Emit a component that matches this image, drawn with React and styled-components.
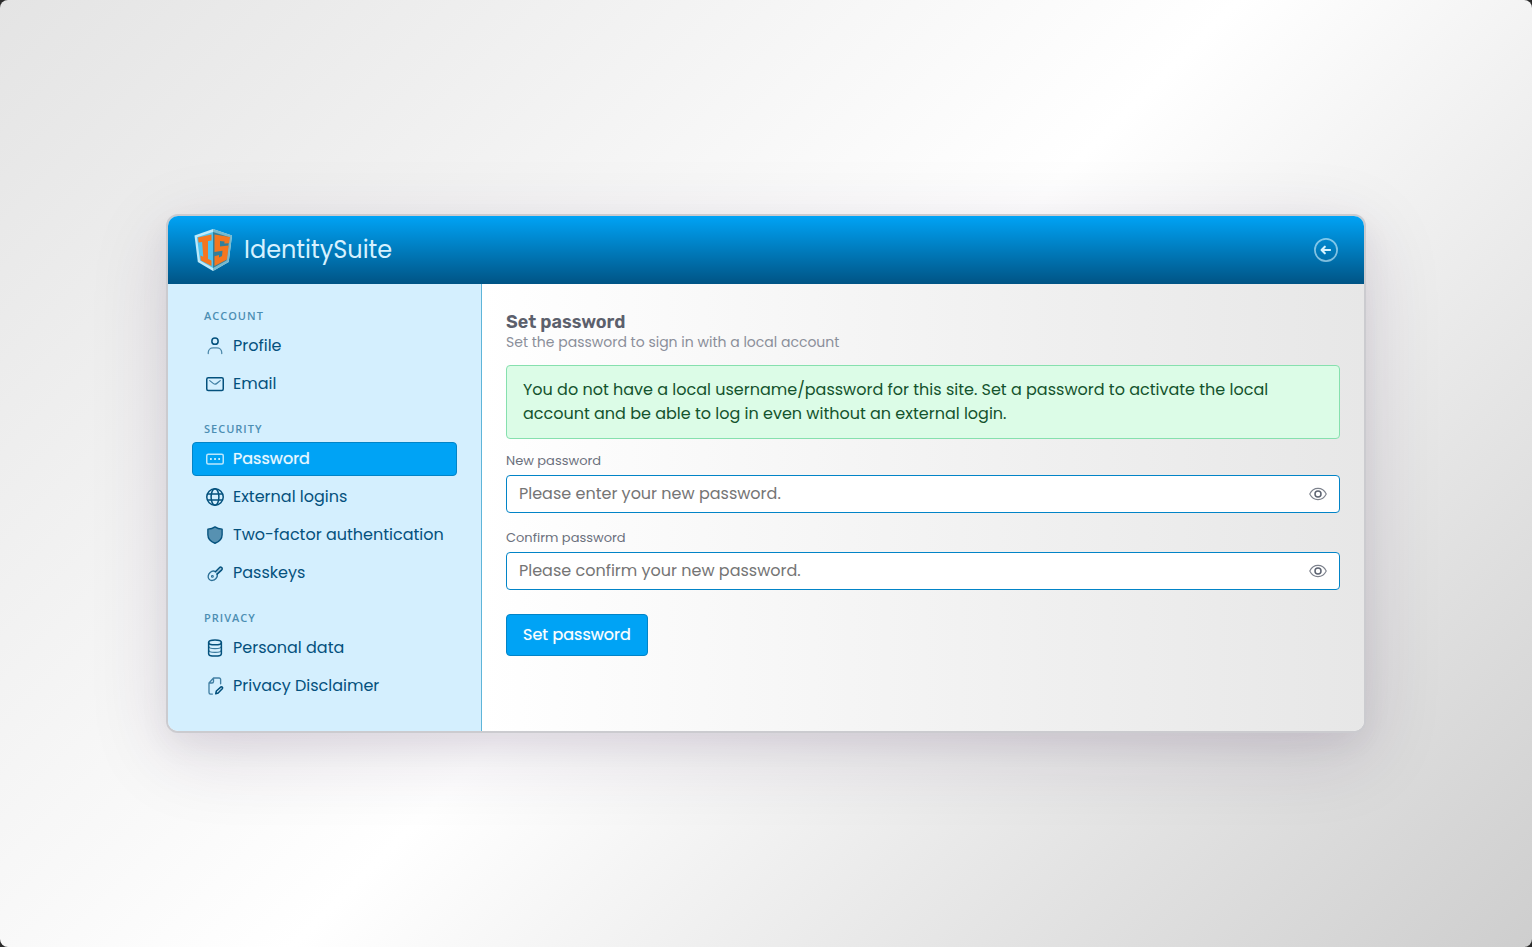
import React from "react";
import styled, { createGlobalStyle, css } from "styled-components";

const GlobalStyle = createGlobalStyle`
  * {
    box-sizing: border-box;
  }
  body {
    margin: 0;
    background: #2b2b2b;
    font-family: Poppins, Inter, "Open Sans", sans-serif;
    font-size: 16px;
    line-height: 24px;
  }
  button,
  input {
    font: inherit;
  }
`;

const Page = styled.div`
  display: flex;
  align-items: center;
  justify-content: center;
  min-height: 100vh;
  padding: 16px;
  border-radius: 8px;
  background: linear-gradient(135deg, #e4e4e4 0%, #ffffff 50%, #cecece 100%);
`;

const Panel = styled.div`
  width: 100%;
  max-width: 1200px;
  overflow: hidden;
  border: 2px solid #cbcbcf;
  border-radius: 12px;
  background: #fff;
  background-clip: padding-box;
  box-shadow: 0 20px 80px rgba(50, 20, 70, 0.14), 0 12px 30px rgba(50, 20, 70, 0.06);
`;

const Header = styled.header`
  display: flex;
  align-items: center;
  justify-content: space-between;
  height: 68px;
  padding: 0 24px;
  background: linear-gradient(180deg, #00a3f5 0%, #005485 100%);
`;

const Brand = styled.a`
  display: flex;
  align-items: center;
  gap: 10px;
  color: #d6f1ff;
  font-size: 24px;
  line-height: 36px;
  text-decoration: none;
`;

const BackButton = styled.button`
  display: flex;
  padding: 0;
  border: 0;
  background: none;
  color: #d6f3ff;
  cursor: pointer;
`;

const Body = styled.div`
  display: flex;
  @media only screen and (max-width: 820px) {
    flex-direction: column;
  }
`;

const Sidebar = styled.nav`
  flex: none;
  width: 314px;
  padding: 24px 24px 28px;
  border-right: 1px solid #5eb5d9;
  background: #d4effe;
  @media only screen and (max-width: 820px) {
    width: 100%;
  }
`;

const Group = styled.section`
  & + & {
    margin-top: 20px;
  }
`;

const GroupTitle = styled.h2`
  margin: 0 0 5px;
  padding: 0 12px;
  color: #4c8eb3;
  font-family: "Open Sans", sans-serif;
  font-size: 11px;
  font-weight: 600;
  line-height: 16px;
  letter-spacing: 1px;
  text-transform: uppercase;
`;

const Menu = styled.ul`
  display: flex;
  flex-direction: column;
  gap: 4px;
  margin: 0;
  padding: 0;
  list-style: none;
`;

const MenuLink = styled.a`
  display: flex;
  align-items: center;
  gap: 9px;
  height: 34px;
  padding: 0 13px;
  border: 1px solid transparent;
  border-radius: 4px;
  color: #04517d;
  text-decoration: none;
  white-space: nowrap;
  ${({ $active }) =>
    $active &&
    css`
      border-color: #0284c7;
      background: #00a3f5;
      color: #e9f8ff;
      text-shadow: 0 0 1px rgba(233, 248, 255, 0.6);
    `}
`;

const Content = styled.main`
  flex: 1;
  min-width: 0;
  padding: 28px 24px;
  background: linear-gradient(90deg, #ffffff 0%, #e7e7e7 100%);
`;

const Title = styled.h1`
  margin: 0;
  color: #5c606c;
  font-family: Rubik, Roboto, sans-serif;
  font-size: 18px;
  font-weight: 600;
  line-height: 20px;
`;

const Subtitle = styled.p`
  margin: 0 0 12px;
  color: #8b8f9a;
  font-size: 14px;
  line-height: 21px;
`;

const Alert = styled.p`
  margin: 0 0 12px;
  padding: 12px 16px;
  border: 1px solid #86e0ae;
  border-radius: 4px;
  background: #dcfce7;
  color: #14532d;
`;

const Field = styled.div`
  margin-bottom: 15px;
`;

const Label = styled.label`
  display: block;
  margin-bottom: 4px;
  color: #6b707c;
  font-size: 13px;
  line-height: 20px;
`;

const InputBox = styled.div`
  display: flex;
  align-items: center;
  height: 38px;
  padding: 0 12px;
  border: 1px solid #0284c7;
  border-radius: 4px;
  background: #fff;
`;

const Input = styled.input`
  flex: 1;
  min-width: 0;
  padding: 0;
  border: 0;
  outline: 0;
  background: none;
  color: #4b5563;
  &::placeholder {
    color: #757575;
    opacity: 1;
  }
`;

const EyeButton = styled.button`
  display: flex;
  padding: 0;
  border: 0;
  background: none;
  color: #5c6371;
  cursor: pointer;
`;

const Submit = styled.button`
  height: 42px;
  margin-top: 9px;
  padding: 0 16px;
  border: 1px solid #0284c7;
  border-radius: 4px;
  background: #00a3f5;
  color: #fff;
  text-shadow: 0 0 1px rgba(255, 255, 255, 0.5);
  cursor: pointer;
`;

const Svg = styled.svg`
  flex: none;
  fill: none;
  stroke: currentColor;
  stroke-width: 1.5;
  stroke-linecap: round;
  stroke-linejoin: round;
`;

const Icon = ({ size = 18, children }) => (
  <Svg width={size} height={size} viewBox="0 0 24 24" aria-hidden="true">
    {children}
  </Svg>
);

const icons = {
  profile: (
    <>
      <circle cx="12" cy="5.5" r="4.2" strokeWidth="2" />
      <path d="M3 22v-1c0-4 3-6.5 6.5-6.5h5c3.5 0 6.5 2.5 6.5 6.5v1" strokeWidth="1.7" opacity="0.65" />
    </>
  ),
  email: (
    <>
      <rect x="1" y="3.5" width="22" height="17" rx="2" strokeWidth="2" />
      <path d="M5 7.5l5 4c1.3 1 2.7 1 4 0l5-4" strokeWidth="1.7" opacity="0.7" />
    </>
  ),
  password: (
    <>
      <rect x="1" y="5.5" width="22" height="13" rx="2" strokeWidth="2" opacity="0.8" />
      <path d="M6.5 12h.1M12 12h.1M17.5 12h.1" strokeWidth="2.6" />
    </>
  ),
  globe: (
    <>
      <circle cx="12" cy="12" r="11" strokeWidth="2" />
      <ellipse cx="12" cy="12" rx="5.2" ry="11" strokeWidth="2" />
      <path d="M2.5 8h19M2.5 16h19" strokeWidth="2" />
    </>
  ),
  shield: (
    <path
      d="M12 1.2c2.5 1.9 5.5 2.9 9.5 3v7.3c0 5.3-3.5 9.2-9.5 11.5-6-2.3-9.5-6.2-9.5-11.5V4.2c3.800-.1 7-1.100 9.500-3z"
      fill="currentColor"
      fillOpacity="0.6"
      strokeWidth="1.8"
    />
  ),
  key: (
    <>
      <path
        d="M12.5 10.2l6-5.900c1-1 3.500.8 3.200 2.400 0 .5-.4 1-1 1.500l-5.800 5.300"
        fill="currentColor"
        fillOpacity="0.25"
        strokeWidth="1.9"
      />
      <path
        d="M12.5 10.2c-2-1.200-5-.7-7 1.200-3 2.800-3.500 6.800-1.200 9.100s6.300 1.800 9-1.100c1.900-2 2.400-4.100 1.100-6.100"
        strokeWidth="1.8"
        opacity="0.8"
      />
      <circle cx="8.5" cy="16.5" r="1.200" opacity="0.8" />
    </>
  ),
  database: (
    <>
      <ellipse cx="12" cy="4.5" rx="8.5" ry="3.3" strokeWidth="2" />
      <path d="M3.5 4.5v15c0 1.900 3.800 3.300 8.500 3.300s8.500-1.400 8.500-3.300v-15" strokeWidth="2" />
      <path
        d="M3.5 9.5c0 1.900 3.800 3.300 8.500 3.300s8.500-1.400 8.500-3.300M3.500 14.500c0 1.900 3.800 3.300 8.500 3.300s8.500-1.400 8.500-3.300"
        opacity="0.75"
      />
    </>
  ),
  document: (
    <>
      <path
        d="M19.500 9V3.300c0-1.200-.8-2-2-2H10L4 8v12.800c0 1.200.8 2 2 2h2.500M10 1.300V6c0 1.200-.8 2-2 2H4"
        strokeWidth="1.8"
        opacity="0.7"
      />
      <path d="M13 22.300l.8-3.600 6.200-5.500c1-.8 2.800.9 2 2l-5.800 6.200z" strokeWidth="2" />
    </>
  ),
  eye: (
    <>
      <path d="M1 12c2.500-5 6.300-7.500 11-7.500S20.500 7 23 12c-2.500 5-6.300 7.500-11 7.500S3.500 17 1 12z" opacity="0.8" />
      <circle cx="12" cy="12" r="4" strokeWidth="2" />
    </>
  ),
};

const Logo = () => (
  <svg width="42" height="44" viewBox="0 0 42 44" aria-hidden="true">
    <path d="M21 1L2.500 7.500 5.800 34 21 43l15.700-9L40 7.500z" fill="#bdeafa" />
    <path d="M21 1v42l15.700-9L40 7.500z" fill="#78b9cc" />
    <path d="M21 4L5 9.300 8 32.500 21 40z" fill="#4fc3f0" />
    <path d="M21 4v36l13.500-7.500L37.500 9.300z" fill="#327f9b" />
    <path d="M6 9.500L19.500 6.500v6l-3.500.6v17.900l3.500 1.500v5.500L9 32.500l-.7-5 3 1.300-1.200-14.800-3.500.6z" fill="#f5761f" />
    <path
      d="M38 9L22.500 6.500V24l8-1.200-.5 5.200-3 1.500V27l-4.500 1.200V38L35 31.500l1.700-14L28 18.500V13l4.500.6-.2 2 4.800-.4z"
      fill="#f5761f"
    />
  </svg>
);

const groups = [
  {
    title: "Account",
    items: [
      { label: "Profile", icon: "profile" },
      { label: "Email", icon: "email" },
    ],
  },
  {
    title: "Security",
    items: [
      { label: "Password", icon: "password", active: true },
      { label: "External logins", icon: "globe" },
      { label: "Two-factor authentication", icon: "shield" },
      { label: "Passkeys", icon: "key" },
    ],
  },
  {
    title: "Privacy",
    items: [
      { label: "Personal data", icon: "database" },
      { label: "Privacy Disclaimer", icon: "document" },
    ],
  },
];

const PasswordField = ({ id, label, placeholder }) => {
  const [visible, setVisible] = React.useState(false);

  return (
    <Field>
      <Label htmlFor={id}>{label}</Label>
      <InputBox>
        <Input id={id} type={visible ? "text" : "password"} placeholder={placeholder} />
        <EyeButton type="button" aria-label="Show password" onClick={() => setVisible(!visible)}>
          <Icon>{icons.eye}</Icon>
        </EyeButton>
      </InputBox>
    </Field>
  );
};

const App = () => (
  <>
    <GlobalStyle />
    <Page>
      <Panel>
        <Header>
          <Brand href="#">
            <Logo />
            <span>IdentitySuite</span>
          </Brand>
          <BackButton type="button" aria-label="Back">
            <Icon size={28}>
              <circle cx="12" cy="12" r="9.5" opacity="0.6" />
              <path d="M15.5 12H8.500M11 9.200L8.200 12l2.800 2.800" strokeWidth="1.8" />
            </Icon>
          </BackButton>
        </Header>
        <Body>
          <Sidebar>
            {groups.map((group) => (
              <Group key={group.title}>
                <GroupTitle>{group.title}</GroupTitle>
                <Menu>
                  {group.items.map((item) => (
                    <li key={item.label}>
                      <MenuLink href="#" $active={item.active}>
                        <Icon>{icons[item.icon]}</Icon>
                        {item.label}
                      </MenuLink>
                    </li>
                  ))}
                </Menu>
              </Group>
            ))}
          </Sidebar>
          <Content>
            <Title>Set password</Title>
            <Subtitle>Set the password to sign in with a local account</Subtitle>
            <Alert>
              You do not have a local username/password for this site. Set a password to activate
              the local account and be able to log in even without an external login.
            </Alert>
            <form onSubmit={(e) => e.preventDefault()}>
              <PasswordField
                id="new-password"
                label="New password"
                placeholder="Please enter your new password."
              />
              <PasswordField
                id="confirm-password"
                label="Confirm password"
                placeholder="Please confirm your new password."
              />
              <Submit type="submit">Set password</Submit>
            </form>
          </Content>
        </Body>
      </Panel>
    </Page>
  </>
);

export default App;
